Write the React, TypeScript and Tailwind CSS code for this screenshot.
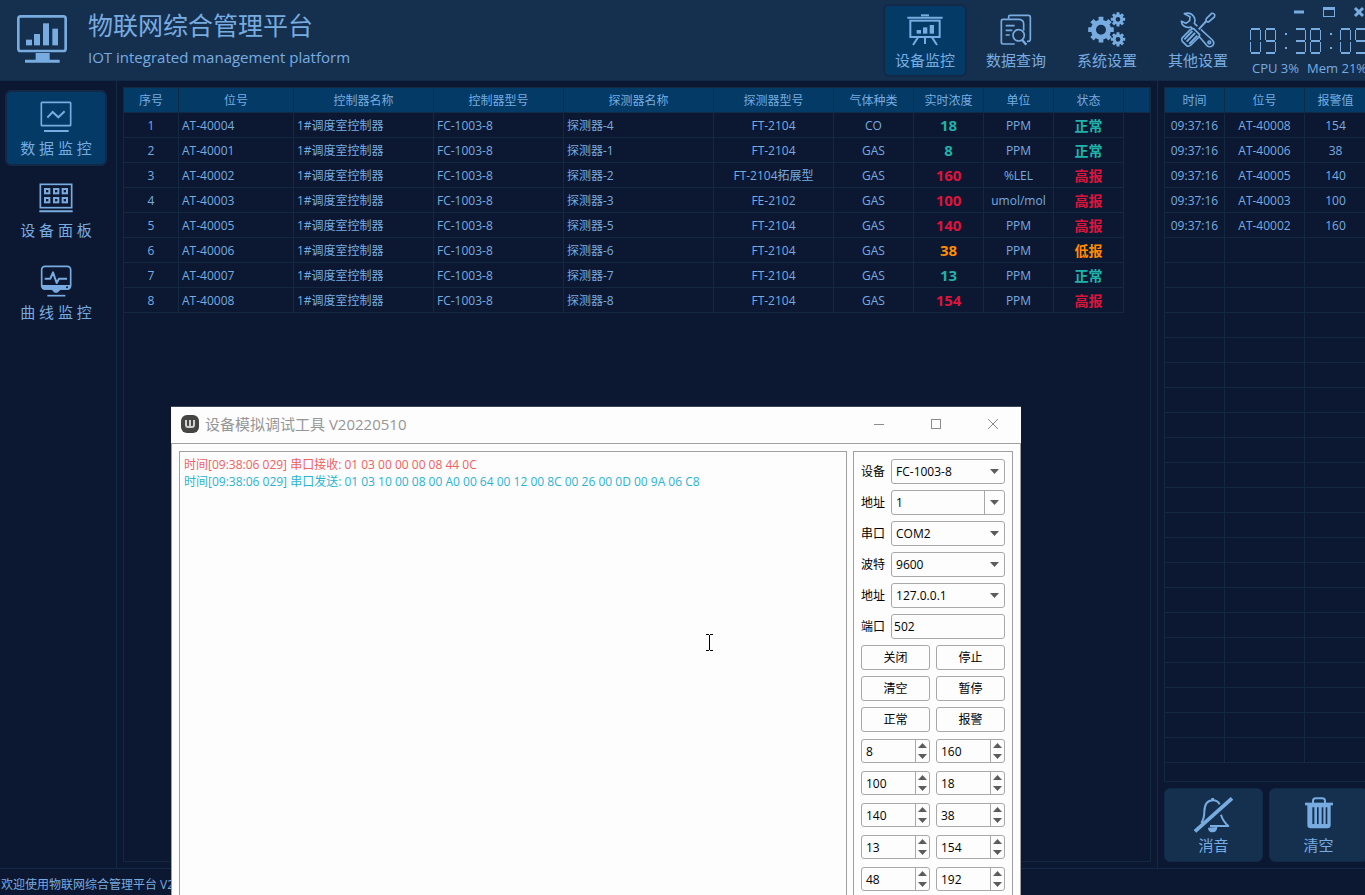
import { useState, type ReactNode } from 'react'

type Level = 'normal' | 'low' | 'high'

interface Device {
  tag: string
  detector: string
  model: string
  gas: string
  value: number
  unit: string
  level: Level
}

const devices: Device[] = [
  { tag: 'AT-40004', detector: '探测器-4', model: 'FT-2104', gas: 'CO', value: 18, unit: 'PPM', level: 'normal' },
  { tag: 'AT-40001', detector: '探测器-1', model: 'FT-2104', gas: 'GAS', value: 8, unit: 'PPM', level: 'normal' },
  { tag: 'AT-40002', detector: '探测器-2', model: 'FT-2104拓展型', gas: 'GAS', value: 160, unit: '%LEL', level: 'high' },
  { tag: 'AT-40003', detector: '探测器-3', model: 'FE-2102', gas: 'GAS', value: 100, unit: 'umol/mol', level: 'high' },
  { tag: 'AT-40005', detector: '探测器-5', model: 'FT-2104', gas: 'GAS', value: 140, unit: 'PPM', level: 'high' },
  { tag: 'AT-40006', detector: '探测器-6', model: 'FT-2104', gas: 'GAS', value: 38, unit: 'PPM', level: 'low' },
  { tag: 'AT-40007', detector: '探测器-7', model: 'FT-2104', gas: 'GAS', value: 13, unit: 'PPM', level: 'normal' },
  { tag: 'AT-40008', detector: '探测器-8', model: 'FT-2104', gas: 'GAS', value: 154, unit: 'PPM', level: 'high' },
]

const alarms = [
  { time: '09:37:16', tag: 'AT-40008', value: 154 },
  { time: '09:37:16', tag: 'AT-40006', value: 38 },
  { time: '09:37:16', tag: 'AT-40005', value: 140 },
  { time: '09:37:16', tag: 'AT-40003', value: 100 },
  { time: '09:37:16', tag: 'AT-40002', value: 160 },
]

// The alarm grid always shows this many rows, filled or not.
const ALARM_ROWS = 26

const levelColor: Record<Level, string> = {
  normal: 'text-[#20b2aa]',
  low: 'text-[#ff8c00]',
  high: 'text-[#dc143c]',
}

const levelText: Record<Level, string> = { normal: '正常', low: '低报', high: '高报' }

const deviceHeads = ['序号', '位号', '控制器名称', '控制器型号', '探测器名称', '探测器型号', '气体种类', '实时浓度', '单位', '状态', '']

const th = 'h-[25px] border-r border-b border-[#112a48] bg-[#033a66] px-0 pt-[2px] pb-0 text-center font-normal leading-[22px]'
const td = 'h-[25px] border-r border-b border-[#132942] px-[3px] pt-[2px] pb-0 leading-[22px]'
const tdValue = 'h-[25px] border-r border-b border-[#132942] px-[3px] py-0 text-center text-[15px] leading-6 font-bold'

/* ---------- icons ---------- */

function LogoIcon() {
  return (
    <svg width="50" height="48" viewBox="0 0 150 144" fill="currentColor" aria-hidden="true">
      <rect x="4" y="4" width="142" height="104" rx="7" fill="none" stroke="currentColor" strokeWidth="8" />
      <rect x="27" y="74" width="18" height="17" />
      <rect x="51" y="57" width="18" height="34" />
      <rect x="78" y="25" width="18" height="66" />
      <rect x="106" y="41" width="17" height="50" />
      <path d="M56 114h42v20h30v9H24v-9h32z" />
    </svg>
  )
}

function BoardIcon() {
  return (
    <svg width="36" height="32" viewBox="0 0 108 96" fill="none" stroke="currentColor" strokeWidth="6" aria-hidden="true">
      <path d="M1 11h106" />
      <path d="M42 4h24" />
      <rect x="10" y="20" width="88" height="49" />
      <path d="M33 70L18 93M54 70v20M75 70l15 23" />
      <g fill="currentColor" stroke="none">
        <rect x="29" y="48" width="13" height="11" />
        <rect x="48" y="40" width="13" height="19" />
        <rect x="68" y="33" width="13" height="26" />
      </g>
    </svg>
  )
}

function QueryIcon() {
  return (
    <svg width="32" height="32" viewBox="0 0 96 96" fill="none" stroke="currentColor" strokeWidth="5" aria-hidden="true">
      <path d="M26 14V8q0-4 4-4h55q6 0 6 6v66q0 6-6 6h-4" />
      <path d="M44 90H9q-5 0-5-5V21q0-5 5-5h50q12 2 12 14v20" />
      <path d="M17 35h27M17 49h20M17 63h12" />
      <circle cx="56" cy="64" r="17" />
      <path d="M66 77l13 15" strokeWidth="7" />
    </svg>
  )
}

function Gear({ cx, cy, inner, outer, tooth }: { cx: number; cy: number; inner: number; outer: number; tooth: number }) {
  const ring = (inner + outer) / 2
  return (
    <g>
      <circle cx={cx} cy={cy} r={ring} fill="none" stroke="currentColor" strokeWidth={outer - inner} />
      {[0, 45, 90, 135, 180, 225, 270, 315].map((angle) => (
        <rect
          key={angle}
          x={cx - tooth / 2}
          y={cy - outer - tooth * 0.6}
          width={tooth}
          height={tooth}
          rx="1"
          fill="currentColor"
          transform={`rotate(${angle} ${cx} ${cy})`}
        />
      ))}
    </g>
  )
}

function GearsIcon() {
  return (
    <svg width="38" height="35" viewBox="0 0 114 105" aria-hidden="true">
      <Gear cx={39} cy={53} inner={15} outer={30} tooth={14} />
      <Gear cx={90} cy={22} inner={7} outer={16} tooth={9} />
      <Gear cx={90} cy={82} inner={7} outer={16} tooth={9} />
    </svg>
  )
}

function ToolsIcon() {
  return (
    <svg width="36" height="36" viewBox="0 0 108 108" fill="none" stroke="currentColor" strokeWidth="5" strokeLinejoin="round" aria-hidden="true">
      <path d="M13 5q21-6 30 12 4 9 0 17L97 84q8 9 1 17-9 7-18-1L33 45q-10 4-20-2-8-5-9-15l14 6 11-8 1-12z" />
      <circle cx="88" cy="91" r="4" />
      <path d="M48 58L77 26" stroke="#15304f" strokeWidth="14" />
      <path d="M56 52L82 24" strokeWidth="6" />
      <path d="M79 20L95 4q6-1 9 4 1 3-1 7L87 29q-5 2-8-2-2-3 0-7z" fill="#15304f" />
      <path d="M41 50l18 18q-1 7-5 10L33 99q-6 6-13 2L7 88q-4-6 1-12l23-23q5-3 10-3z" fill="#15304f" />
      <path d="M37 57L13 82M45 63L20 89M52 71L28 96" strokeWidth="6" />
    </svg>
  )
}

function TrendIcon() {
  return (
    <svg width="32" height="32" viewBox="0 0 96 96" fill="none" stroke="currentColor" strokeWidth="5" aria-hidden="true">
      <rect x="4" y="4" width="88" height="70" rx="2" />
      <path d="M22 50l16-17 17 16 19-18" strokeWidth="6" />
      <path d="M12 90h74" strokeWidth="6" />
    </svg>
  )
}

function PanelIcon() {
  return (
    <svg width="34" height="30" viewBox="0 0 102 90" fill="none" stroke="currentColor" strokeWidth="5" aria-hidden="true">
      <rect x="4" y="4" width="94" height="70" />
      <path d="M1 85h100" strokeWidth="6" />
      <g strokeWidth="6">
        <rect x="18" y="18" width="13" height="13" />
        <rect x="45" y="18" width="13" height="13" />
        <rect x="71" y="18" width="13" height="13" />
        <rect x="18" y="45" width="13" height="13" />
        <rect x="45" y="45" width="13" height="13" />
        <rect x="71" y="45" width="13" height="13" />
      </g>
    </svg>
  )
}

function CurveIcon() {
  return (
    <svg width="32" height="32" viewBox="0 0 96 96" fill="none" stroke="currentColor" strokeWidth="5" aria-hidden="true">
      <rect x="5" y="4" width="87" height="68" rx="10" />
      <path d="M5 60h87v6q0 8-8 8H62l-10 9h-8l-9-9H13q-8 0-8-8z" fill="currentColor" stroke="none" />
      <path d="M14 41h17l8-19 11 32 7-13h24" strokeWidth="6" strokeLinejoin="round" />
      <circle cx="81" cy="67" r="3" fill="#0c1831" stroke="none" />
      <path d="M22 92h54" />
    </svg>
  )
}

function MuteIcon() {
  return (
    <svg width="39" height="36" viewBox="0 0 117 108" fill="none" stroke="currentColor" strokeWidth="6" aria-hidden="true">
      <path d="M56 3v7" strokeWidth="8" />
      <path d="M22 78q9-14 9-34 1-34 26-34 14 0 20 12" />
      <path d="M81 53q6 20 22 34H48" strokeLinejoin="round" />
      <path d="M42 92q1 14 14 14 13 0 14-16" fill="currentColor" stroke="none" />
      <path d="M3 103L114 4" strokeWidth="11" />
    </svg>
  )
}

function BinIcon() {
  return (
    <svg width="28" height="32" viewBox="0 0 84 96" aria-hidden="true">
      <path d="M24 20v-8q0-8 8-8h20q8 0 8 8v8" fill="none" stroke="currentColor" strokeWidth="6" />
      <path d="M0 17h84v8H0z" fill="currentColor" />
      <path
        d="M7 24h70v60q0 10-10 10H17Q7 94 7 84zM22 31v50h6V31zM36 31v50h5V31zM50 31v50h5V31zM62 31v50h5V31z"
        fill="currentColor"
        fillRule="evenodd"
      />
    </svg>
  )
}

/* ---------- clock ---------- */

// Segments in order: top, upper left, upper right, middle, lower left, lower right, bottom.
const segmentCells = [
  'col-start-2 row-start-1',
  'col-start-1 row-start-2',
  'col-start-3 row-start-2',
  'col-start-2 row-start-3',
  'col-start-1 row-start-4',
  'col-start-3 row-start-4',
  'col-start-2 row-start-5',
]

const segments: Record<string, string> = {
  '0': '1110111',
  '1': '0010010',
  '2': '1011101',
  '3': '1011011',
  '4': '0111010',
  '5': '1101011',
  '6': '1101111',
  '7': '1010010',
  '8': '1111111',
  '9': '1111011',
}

function LcdClock({ time }: { time: string }) {
  return (
    <time role="img" aria-label={time} className="flex gap-1">
      {time.split('').map((char, i) =>
        char === ':' ? (
          <span key={i} className="flex h-[26px] w-[11px] flex-col items-center justify-center gap-3">
            <span className="size-[2px] bg-[#78ace0]" />
            <span className="size-[2px] bg-[#78ace0]" />
          </span>
        ) : (
          <span key={i} className="grid grid-cols-[1px_9px_1px] grid-rows-[2px_10px_2px_10px_2px]">
            {segmentCells.map((cell, s) =>
              segments[char][s] === '1' ? <span key={cell} className={`bg-[#78ace0] ${cell}`} /> : null,
            )}
          </span>
        ),
      )}
    </time>
  )
}

/* ---------- main window ---------- */

const modules = [
  { label: '设备监控', icon: <BoardIcon /> },
  { label: '数据查询', icon: <QueryIcon /> },
  { label: '系统设置', icon: <GearsIcon /> },
  { label: '其他设置', icon: <ToolsIcon /> },
]

const views = [
  { label: '数 据 监 控', icon: <TrendIcon /> },
  { label: '设 备 面 板', icon: <PanelIcon /> },
  { label: '曲 线 监 控', icon: <CurveIcon /> },
]

function TopBar() {
  const [active, setActive] = useState('设备监控')
  return (
    <header className="flex h-[81px] shrink-0 overflow-hidden border-b border-[#112a48] bg-[#15304f] pl-[17px]">
      <div className="flex grow gap-[21px]">
        <div className="pt-[15px]">
          <LogoIcon />
        </div>
        <div className="pt-[7px]">
          <h1 className="text-[25px] leading-9">物联网综合管理平台</h1>
          <p className="text-[15px] leading-7">IOT integrated management platform</p>
        </div>
      </div>
      <nav className="flex shrink-0 gap-[7px] pt-1">
        {modules.map((m) => (
          <button
            key={m.label}
            type="button"
            onClick={() => setActive(m.label)}
            className={`flex h-[73px] w-[84px] flex-col items-center rounded-md border-2 pt-[3px] text-[15px] leading-5 ${
              active === m.label ? 'border-[#142848] bg-[#033a66]' : 'border-transparent'
            }`}
          >
            <span className="flex h-[41px] items-center">{m.icon}</span>
            {m.label}
          </button>
        ))}
      </nav>
      <div className="-mr-1 ml-[10px] flex w-[119px] shrink-0 flex-col">
        <div className="flex h-[28px] items-start justify-end gap-[18px] pt-[6px] pr-1">
          <button type="button" aria-label="最小化">
            <svg width="12" height="12" viewBox="0 0 12 12">
              <path d="M1 6h10" stroke="currentColor" strokeWidth="3" />
            </svg>
          </button>
          <button type="button" aria-label="最大化">
            <svg width="12" height="12" viewBox="0 0 12 12">
              <rect x="0.5" y="1.5" width="11" height="9" fill="none" stroke="currentColor" />
              <path d="M0 2.5h12" stroke="currentColor" strokeWidth="3" />
            </svg>
          </button>
          <button type="button" aria-label="关闭">
            <svg width="12" height="12" viewBox="0 0 12 12">
              <path d="M2 2l8 8M10 2l-8 8" stroke="currentColor" strokeWidth="3" />
            </svg>
          </button>
        </div>
        <LcdClock time="09:38:05" />
        <p className="flex gap-2 pt-[5px] pl-[2px] text-[13px] leading-[18px] whitespace-nowrap">
          <span>CPU 3%</span>
          <span>Mem 21%</span>
        </p>
      </div>
    </header>
  )
}

function SideBar() {
  const [active, setActive] = useState('数 据 监 控')
  return (
    <nav className="flex w-[117px] shrink-0 flex-col gap-[6px] border-r border-[#112a48] pt-[9px] pl-[5px]">
      {views.map((v) => (
        <button
          key={v.label}
          type="button"
          onClick={() => setActive(v.label)}
          className={`flex h-[76px] w-[102px] flex-col items-center rounded-md border-2 pt-[9px] text-[15px] leading-5 ${
            active === v.label ? 'border-[#142848] bg-[#033a66]' : 'border-transparent'
          }`}
        >
          <span className="flex h-[37px] items-start">{v.icon}</span>
          {v.label}
        </button>
      ))}
    </nav>
  )
}

function DeviceTable() {
  return (
    <div className="grow border border-[#132942]">
      <table className="w-full table-fixed border-separate border-spacing-0">
        <colgroup>
          <col className="w-[55px]" />
          <col className="w-[115px]" />
          <col className="w-[140px]" />
          <col className="w-[130px]" />
          <col className="w-[150px]" />
          <col className="w-[120px]" />
          <col className="w-[80px]" />
          <col className="w-[70px]" />
          <col className="w-[70px]" />
          <col className="w-[70px]" />
          <col />
        </colgroup>
        <thead>
          <tr>
            {deviceHeads.map((h) => (
              <th key={h} className={th}>
                {h}
              </th>
            ))}
          </tr>
        </thead>
        <tbody>
          {devices.map((d, i) => (
            <tr key={d.tag}>
              <td className={`${td} text-center`}>{i + 1}</td>
              <td className={td}>{d.tag}</td>
              <td className={td}>1#调度室控制器</td>
              <td className={td}>FC-1003-8</td>
              <td className={td}>{d.detector}</td>
              <td className={`${td} text-center`}>{d.model}</td>
              <td className={`${td} text-center`}>{d.gas}</td>
              <td className={`${tdValue} ${levelColor[d.level]}`}>{d.value}</td>
              <td className={`${td} text-center`}>{d.unit}</td>
              <td className={`${td} text-center text-[14px] font-bold ${levelColor[d.level]}`}>{levelText[d.level]}</td>
              <td />
            </tr>
          ))}
        </tbody>
      </table>
    </div>
  )
}

function SideAction({ label, icon }: { label: string; icon: ReactNode }) {
  return (
    <button
      type="button"
      className="flex h-[74px] grow basis-0 flex-col items-center rounded-md border border-[#112a48] bg-[#15304f] pt-2 text-[15px] leading-5"
    >
      <span className="flex h-[38px] items-start">{icon}</span>
      {label}
    </button>
  )
}

function AlarmPanel() {
  return (
    <aside className="-mr-[3px] flex w-[211px] shrink-0 flex-col gap-[6px] border-l border-[#112a48] py-[6px] pl-[6px]">
      <div className="grow border border-[#132942]">
        <table className="w-full table-fixed border-separate border-spacing-0">
          <colgroup>
            <col className="w-[60px]" />
            <col className="w-[80px]" />
            <col />
          </colgroup>
          <thead>
            <tr>
              <th className={th}>时间</th>
              <th className={th}>位号</th>
              <th className={th}>报警值</th>
            </tr>
          </thead>
          <tbody>
            {Array.from({ length: ALARM_ROWS }, (_, i) => (
              <tr key={i}>
                <td className={`${td} text-center`}>{alarms[i]?.time}</td>
                <td className={`${td} text-center`}>{alarms[i]?.tag}</td>
                <td className={`${td} text-center`}>{alarms[i]?.value}</td>
              </tr>
            ))}
          </tbody>
        </table>
      </div>
      <div className="flex gap-[6px]">
        <SideAction label="消音" icon={<MuteIcon />} />
        <SideAction label="清空" icon={<BinIcon />} />
      </div>
    </aside>
  )
}

/* ---------- simulator window ---------- */

const field = 'h-[25px] w-full rounded-[3px] border border-[#a8a8a8] bg-[#fdfdfd] outline-none'

function DownArrow() {
  return (
    <svg width="9" height="5" viewBox="0 0 9 5" fill="#5c5c5c" aria-hidden="true">
      <path d="M0 0h9L4.5 5z" />
    </svg>
  )
}

function UpArrow() {
  return (
    <svg width="9" height="5" viewBox="0 0 9 5" fill="#5c5c5c" aria-hidden="true">
      <path d="M0 5h9L4.5 0z" />
    </svg>
  )
}

function FormRow({ id, label, children }: { id: string; label: string; children: ReactNode }) {
  return (
    <div className="flex h-[25px] items-center gap-[6px]">
      <label htmlFor={id} className="shrink-0">
        {label}
      </label>
      <div className="relative grow">{children}</div>
    </div>
  )
}

function Combo({ id, label, value }: { id: string; label: string; value: string }) {
  return (
    <FormRow id={id} label={label}>
      <select id={id} defaultValue={value} className={`${field} block appearance-none pl-1`}>
        <option>{value}</option>
      </select>
      <span className="pointer-events-none absolute inset-y-0 right-[6px] flex items-center">
        <DownArrow />
      </span>
    </FormRow>
  )
}

function Spin({ label, initial }: { label: string; initial: number }) {
  const [value, setValue] = useState(initial)
  return (
    <div className="flex h-[24px] overflow-hidden rounded-[3px] border border-[#a8a8a8]">
      <input
        type="number"
        aria-label={label}
        value={value}
        onChange={(e) => setValue(Number(e.target.value))}
        className="w-0 grow pt-px pl-1 outline-none [appearance:textfield] [&::-webkit-inner-spin-button]:appearance-none"
      />
      <div className="flex w-[14px] shrink-0 flex-col border-l border-[#a8a8a8]">
        <button type="button" aria-label="增加" onClick={() => setValue(value + 1)} className="flex grow items-center justify-center">
          <UpArrow />
        </button>
        <button type="button" aria-label="减少" onClick={() => setValue(value - 1)} className="flex grow items-center justify-center">
          <DownArrow />
        </button>
      </div>
    </div>
  )
}

const spinValues = [8, 160, 100, 18, 140, 38, 13, 154, 48, 192]

function SimulatorWindow() {
  return (
    <section className="absolute top-[406px] bottom-0 left-[171px] flex w-[850px] flex-col overflow-hidden border-t border-[#3a4558] bg-[#fdfdfd] text-black">
      <div className="flex h-[36px] shrink-0 items-center pb-[2px] pl-[10px] text-[#969696]">
        <svg width="18" height="18" viewBox="0 0 18 18" aria-hidden="true" className="shrink-0">
          <rect width="18" height="18" rx="6" fill="#454543" />
          <path d="M5 5v5q0 2 2 2h4q2 0 2-2V5M9 5v7" fill="none" stroke="#d0d0d0" strokeWidth="2" />
        </svg>
        <h2 className="grow pl-[6px] text-[15px]">设备模拟调试工具 V20220510</h2>
        <div className="flex gap-[45px] pr-[22px]">
          <button type="button" aria-label="最小化">
            <svg width="12" height="12" viewBox="0 0 12 12" fill="none" stroke="#8c8c8c">
              <path d="M1 6.5h10" />
            </svg>
          </button>
          <button type="button" aria-label="最大化">
            <svg width="12" height="12" viewBox="0 0 12 12" fill="none" stroke="#8c8c8c">
              <rect x="1.5" y="1.5" width="9" height="9" />
            </svg>
          </button>
          <button type="button" aria-label="关闭">
            <svg width="12" height="12" viewBox="0 0 12 12" fill="none" stroke="#8c8c8c">
              <path d="M1 1l10 10M11 1L1 11" />
            </svg>
          </button>
        </div>
      </div>
      <div className="flex grow gap-[6px] border border-b-0 border-[#a0a0a0] px-[7px] pt-[7px]">
        <div className="grow border border-b-0 border-[#a0a0a0] px-1 pt-1 text-xs leading-[17px]">
          <p className="text-[#f0605f]">时间[09:38:06 029] 串口接收: 01 03 00 00 00 08 44 0C</p>
          <p className="text-[#2ab3d1]">
            时间[09:38:06 029] 串口发送: 01 03 10 00 08 00 A0 00 64 00 12 00 8C 00 26 00 0D 00 9A 06 C8
          </p>
        </div>
        <form className="flex w-[160px] shrink-0 flex-col gap-[6px] border border-b-0 border-[#a0a0a0] px-[7px] pt-[7px] text-xs">
          <Combo id="device" label="设备" value="FC-1003-8" />
          <FormRow id="address" label="地址">
            <input id="address" defaultValue="1" className={`${field} block pr-5 pl-1`} />
            <button
              type="button"
              aria-label="选择地址"
              className="absolute inset-y-0 right-0 flex w-[21px] items-center border-l border-[#a8a8a8] pl-[5px]"
            >
              <DownArrow />
            </button>
          </FormRow>
          <Combo id="port" label="串口" value="COM2" />
          <Combo id="baud" label="波特" value="9600" />
          <Combo id="host" label="地址" value="127.0.0.1" />
          <FormRow id="tcp" label="端口">
            <input id="tcp" defaultValue="502" className={`${field} block pl-[2px]`} />
          </FormRow>
          <div className="grid grid-cols-2 gap-[6px]">
            {['关闭', '停止', '清空', '暂停', '正常', '报警'].map((label) => (
              <button key={label} type="button" className={field}>
                {label}
              </button>
            ))}
          </div>
          <div className="grid grid-cols-2 gap-x-[6px] gap-y-2 pt-px">
            {spinValues.map((v, i) => (
              <Spin key={i} label={`通道 ${i + 1}`} initial={v} />
            ))}
          </div>
        </form>
      </div>
      <svg width="9" height="17" viewBox="0 0 9 17" fill="none" stroke="#000" aria-hidden="true" className="absolute top-[227px] left-[534px]">
        <path d="M1 .5h3M5 .5h3M4.500 1v15M1 16.500h3M5 16.500h3" />
      </svg>
    </section>
  )
}

export default function App() {
  return (
    <div className="relative flex h-screen flex-col overflow-hidden bg-[#0c1831] font-['Open_Sans','Noto_Sans_CJK_SC',sans-serif] text-xs text-[#78ace0]">
      <TopBar />
      <div className="flex min-h-0 grow">
        <SideBar />
        <main className="flex min-w-0 grow p-[6px]">
          <DeviceTable />
        </main>
        <AlarmPanel />
      </div>
      <footer className="h-[27px] shrink-0 border-t border-[#112a48] pt-1 pl-px leading-6">欢迎使用物联网综合管理平台 V2</footer>
      <SimulatorWindow />
    </div>
  )
}
